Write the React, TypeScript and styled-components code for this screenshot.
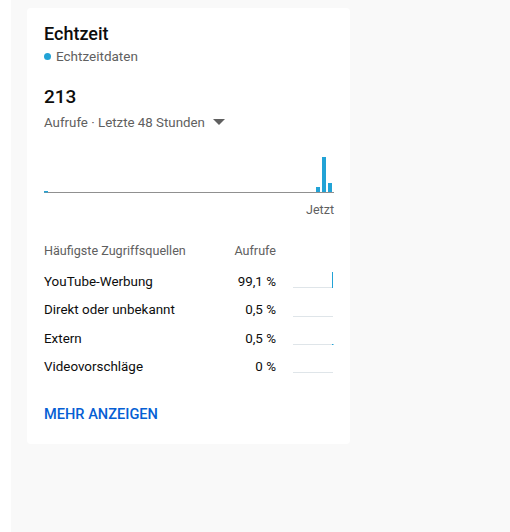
import { Fragment } from "react";
import styled, { createGlobalStyle } from "styled-components";

const GlobalStyle = createGlobalStyle`
  html, body {
    margin: 0;
    padding: 0;
    background: #ffffff;
    font-family: Roboto, "Noto Sans", Arial, sans-serif;
  }
`;

const colors = {
  text: "#0d0d0d",
  secondary: "#606060",
  blue: "#22a3d6",
  link: "#065fd4",
  axis: "#909090",
  spark: "#dfe5e9",
  page: "#f9f9f9",
};

const Page = styled.div`
  margin-left: 11px;
  min-height: 532px;
  background: ${colors.page};
  padding: 8px 0 0 16px;
  box-sizing: border-box;
`;

const Card = styled.section`
  width: 323px;
  box-sizing: border-box;
  background: #ffffff;
  border-radius: 4px;
  padding: 15px 16px 20px 17px;
  display: flex;
  flex-direction: column;
`;

const Title = styled.h2`
  margin: 0;
  font-size: 18px;
  line-height: 22px;
  font-weight: 500;
  color: ${colors.text};
`;

const LiveLabel = styled.div`
  display: flex;
  align-items: center;
  gap: 5px;
  height: 20px;
  font-size: 13.5px;
  color: ${colors.secondary};
  margin-top: 1px;
`;

const Dot = styled.span`
  width: 7px;
  height: 7px;
  border-radius: 50%;
  background: ${colors.blue};
`;

const Count = styled.div`
  margin-top: 18px;
  font-size: 19px;
  line-height: 26px;
  font-weight: 500;
  color: ${colors.text};
`;

const PeriodSelect = styled.div`
  display: flex;
  align-items: center;
  gap: 8px;
  margin-top: 2px;
  height: 20px;
  font-size: 13.3px;
  color: ${colors.secondary};
`;

const Caret = styled.span`
  width: 0;
  height: 0;
  border-left: 6px solid transparent;
  border-right: 6px solid transparent;
  border-top: 6px solid ${colors.secondary};
`;

const Chart = styled.svg`
  display: block;
  margin-top: 11px;
`;

const ChartLabel = styled.div`
  margin-top: 9px;
  text-align: right;
  font-size: 12.5px;
  line-height: 16px;
  color: ${colors.secondary};
`;

const Table = styled.div`
  margin-top: 25px;
  display: grid;
  grid-template-columns: 1fr auto 42px;
  column-gap: 16px;
  align-items: center;
`;

const HeadCell = styled.div<{ $right?: boolean }>`
  font-size: 12.6px;
  line-height: 16px;
  color: ${colors.secondary};
  text-align: ${(p) => (p.$right ? "right" : "left")};
  margin-bottom: 9px;
`;

const Cell = styled.div<{ $right?: boolean }>`
  font-size: 13.4px;
  line-height: 28.4px;
  color: ${colors.text};
  text-align: ${(p) => (p.$right ? "right" : "left")};
`;

const Spark = styled.svg`
  display: block;
`;

const MoreLink = styled.a`
  margin-top: 22px;
  font-size: 14.6px;
  line-height: 20px;
  font-weight: 500;
  color: ${colors.link};
  text-decoration: none;
  cursor: pointer;
`;

const bars = [
  { x: 272, h: 5 },
  { x: 278, h: 35 },
  { x: 284, h: 9 },
];

const sources = [
  { name: "YouTube-Werbung", value: "99,1 %", peak: 16, dot: false },
  { name: "Direkt oder unbekannt", value: "0,5 %", peak: 0, dot: false },
  { name: "Extern", value: "0,5 %", peak: 0, dot: true },
  { name: "Videovorschläge", value: "0 %", peak: 0, dot: false },
];

function Sparkline({ peak, dot }: { peak: number; dot: boolean }) {
  return (
    <Spark width="42" height="20" viewBox="0 0 42 20">
      <line x1="1" y1="15.5" x2="41" y2="15.5" stroke={colors.spark} strokeWidth="1" />
      {peak > 0 && (
        <line x1="40.5" y1={15.5 - peak} x2="40.5" y2="16" stroke={colors.blue} strokeWidth="1" />
      )}
      {dot && <rect x="40" y="15" width="1.5" height="1" fill={colors.blue} />}
    </Spark>
  );
}

export default function App() {
  return (
    <>
      <GlobalStyle />
      <Page>
        <Card>
          <Title>Echtzeit</Title>
          <LiveLabel>
            <Dot />
            Echtzeitdaten
          </LiveLabel>
          <Count>213</Count>
          <PeriodSelect>
            Aufrufe · Letzte 48 Stunden
            <Caret />
          </PeriodSelect>
          <Chart width="290" height="50" viewBox="0 0 290 50">
            <line x1="0" y1="49.5" x2="290" y2="49.5" stroke={colors.axis} strokeWidth="1" />
            <rect x="0" y="48" width="4" height="1.5" fill={colors.blue} />
            {bars.map((b) => (
              <rect key={b.x} x={b.x} y={49 - b.h} width="4" height={b.h} fill={colors.blue} />
            ))}
          </Chart>
          <ChartLabel>Jetzt</ChartLabel>
          <Table>
            <HeadCell>Häufigste Zugriffsquellen</HeadCell>
            <HeadCell $right>Aufrufe</HeadCell>
            <HeadCell />
            {sources.map((s) => (
              <Fragment key={s.name}>
                <Cell>{s.name}</Cell>
                <Cell $right>{s.value}</Cell>
                <Sparkline peak={s.peak} dot={s.dot} />
              </Fragment>
            ))}
          </Table>
          <MoreLink>MEHR ANZEIGEN</MoreLink>
        </Card>
      </Page>
    </>
  );
}
